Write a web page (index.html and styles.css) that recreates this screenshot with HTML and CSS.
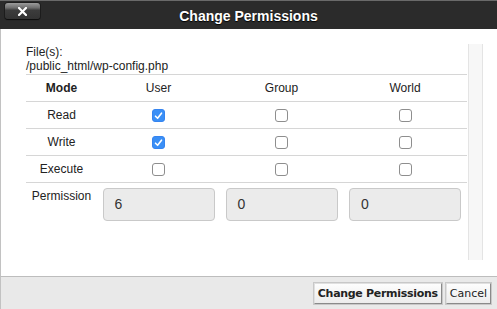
FILE: index.html
```html
<!DOCTYPE html>
<html>
<head>
<meta charset="utf-8">
<link rel="stylesheet" href="styles.css">
</head>
<body>
<div class="dialog">
  <div class="titlebar">
    <div class="tb-left">
      <button class="close" aria-label="Close">
        <svg width="9" height="9" viewBox="0 0 9 9"><path d="M1 1 L8 8 M8 1 L1 8" stroke="#fff" stroke-width="2.2" stroke-linecap="square"/></svg>
      </button>
    </div>
    <div class="title">Change Permissions</div>
    <div></div>
  </div>
  <div class="body">
    <div class="content">
      <div class="files">File(s):<br>/public_html/wp-config.php</div>
      <div class="grid">
        <div class="row head">
          <div class="cell">Mode</div>
          <div class="cell">User</div>
          <div class="cell">Group</div>
          <div class="cell">World</div>
        </div>
        <div class="row">
          <div class="cell">Read</div>
          <div class="cell"><span class="cb on"><svg width="9" height="8" viewBox="0 0 9 8"><path d="M1.5 4.2 L3.6 6.3 L7.5 1.2" fill="none" stroke="#fff" stroke-width="1.6" stroke-linecap="round" stroke-linejoin="round"/></svg></span></div>
          <div class="cell"><span class="cb"></span></div>
          <div class="cell"><span class="cb"></span></div>
        </div>
        <div class="row">
          <div class="cell">Write</div>
          <div class="cell"><span class="cb on"><svg width="9" height="8" viewBox="0 0 9 8"><path d="M1.5 4.2 L3.6 6.3 L7.5 1.2" fill="none" stroke="#fff" stroke-width="1.6" stroke-linecap="round" stroke-linejoin="round"/></svg></span></div>
          <div class="cell"><span class="cb"></span></div>
          <div class="cell"><span class="cb"></span></div>
        </div>
        <div class="row">
          <div class="cell">Execute</div>
          <div class="cell"><span class="cb"></span></div>
          <div class="cell"><span class="cb"></span></div>
          <div class="cell"><span class="cb"></span></div>
        </div>
        <div class="row perm">
          <div class="cell label">Permission</div>
          <div class="cell"><div class="val">6</div></div>
          <div class="cell"><div class="val">0</div></div>
          <div class="cell"><div class="val">0</div></div>
        </div>
      </div>
    </div>
    <div class="rail"></div>
  </div>
  <div class="footer">
    <button class="btn primary">Change Permissions</button>
    <button class="btn">Cancel</button>
  </div>
</div>
</body>
</html>
```
FILE: styles.css
```css
html, body {
  margin: 0;
  padding: 0;
  background: #fff;
}
.dialog {
  width: 497px;
  height: 309px;
  display: flex;
  flex-direction: column;
  font-family: "Liberation Sans", Arial, sans-serif;
  color: #222;
}
.titlebar {
  height: 28px;
  border-top: 1px solid #6a6a6a;
  background: #2b2b2b;
  display: grid;
  grid-template-columns: 1fr auto 1fr;
  align-items: center;
  flex: none;
}
.tb-left {
  align-self: start;
  padding: 2px 0 0 5px;
}
.close {
  width: 35px;
  height: 16px;
  padding: 0;
  border: none;
  border-radius: 3px;
  background: linear-gradient(#9c9c9c 0%, #6e6e6e 30%, #3c3c3c 45%, #333 100%);
  box-shadow: 0 1px 1px #0d0d0d, 0 0 0 1px #1e1e1e;
  display: flex;
  align-items: center;
  justify-content: center;
}
.close svg { display: block; }
.title {
  color: #fff;
  font-weight: bold;
  font-size: 14px;
  text-shadow: 0 1px 1px #000;
  padding-top: 1px;
}
.body {
  flex: none;
  height: 232px;
  border-left: 1px solid #c2c2c2;
  padding: 15px 0 0 25px;
  display: flex;
}
.content {
  width: 441px;
  padding-top: 1px;
  font-size: 12px;
}
.files {
  line-height: 14px;
  margin-bottom: 1px;
}
.row {
  display: grid;
  grid-template-columns: 71px 123px 123px 124px;
  height: 26px;
  border-top: 1px solid #d6d6d6;
  align-items: center;
}
.cell {
  text-align: center;
  line-height: 14px;
  display: flex;
  justify-content: center;
  align-items: center;
}
.head .cell:first-child { font-weight: bold; }
.cb {
  width: 11px;
  height: 11px;
  border: 1px solid #8e8e8e;
  border-radius: 3px;
  background: #fff;
  display: flex;
  align-items: center;
  justify-content: center;
  margin-top: 1px;
}
.cb.on {
  background: #3a8ff6;
  border-color: #3584f0;
}
.cb svg { display: block; }
.row.perm {
  height: auto;
  align-items: start;
  padding-top: 5px;
}
.perm .label {
  padding-top: 1px;
}
.val {
  box-sizing: border-box;
  width: 112px;
  height: 33px;
  border: 1px solid #c9c9c9;
  border-radius: 4px;
  background: #ebebeb;
  font-size: 14px;
  line-height: 31px;
  padding-left: 11px;
  text-align: left;
  color: #333;
}
.rail {
  width: 13px;
  height: 216px;
  margin-top: 0;
  margin-left: 1px;
  background: #f7f7f7;
  border-left: 1px solid #e4e4e4;
  border-right: 1px solid #e4e4e4;
}
.footer {
  flex: 1;
  border-top: 1px solid #bdbdbd;
  border-left: 1px solid #c2c2c2;
  background: #e9e9e9;
  display: flex;
  justify-content: flex-end;
  align-items: flex-start;
  gap: 4px;
  padding: 6px 6px 0 0;
}
.btn {
  font-family: "DejaVu Sans", Verdana, sans-serif;
  font-size: 11px;
  height: 21px;
  padding: 0 3px;
  margin: 0;
  color: #222;
  background: linear-gradient(#fdfdfd, #ececec);
  border: 1px solid;
  border-color: #e0e0e0 #8a8a8a #8a8a8a #e0e0e0;
  border-radius: 0;
  box-shadow: 0 0 0 1px #c8c8c8;
}
.btn.primary {
  font-weight: bold;
  letter-spacing: -0.3px;
}
```
